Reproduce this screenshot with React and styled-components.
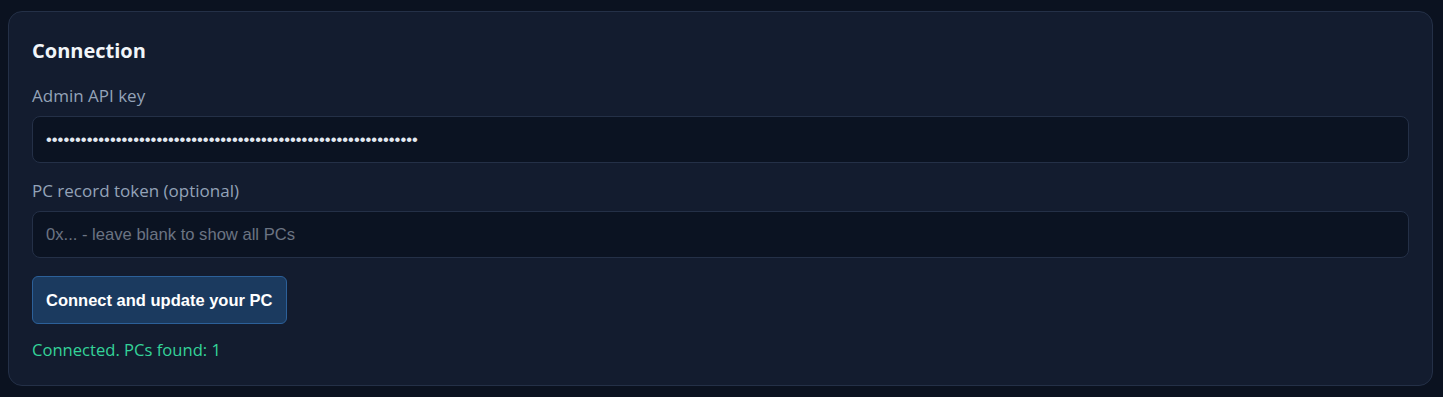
import React, { useState } from 'react'
import styled, { createGlobalStyle } from 'styled-components'

const GlobalStyle = createGlobalStyle`
  html, body {
    margin: 0;
    background: #0b1220;
  }
  body {
    padding: 11px 10px 10px 8px;
    font-family: "Open Sans", "Noto Sans", sans-serif;
  }
`

const Card = styled.section`
  background: #131c2f;
  border: 1px solid #243047;
  border-radius: 14px;
  padding: 25px 23px 23px 23px;
  display: flex;
  flex-direction: column;
`

const Title = styled.h2`
  margin: 0 0 19px;
  font-size: 20px;
  line-height: 28px;
  font-weight: 700;
  color: #f1f5f9;
`

const Field = styled.div`
  display: flex;
  flex-direction: column;
  gap: 8px;
  margin-bottom: ${p => p.$mb || 16}px;
`

const Label = styled.label`
  font-size: 17px;
  line-height: 24px;
  color: #94a3b8;
`

const Input = styled.input`
  box-sizing: border-box;
  height: 47px;
  width: 100%;
  padding: 0 13px;
  background: #0b1322;
  border: 1px solid #243047;
  border-radius: 8px;
  color: #e2e8f0;
  font-family: "Liberation Sans", Arial, sans-serif;
  font-size: 16.6px;
  outline: none;
  &::placeholder {
    color: #6b7483;
  }
`

const Button = styled.button`
  align-self: flex-start;
  height: 48px;
  padding: 0 14px 0 13px;
  background: #1b3a5f;
  border: 1px solid #2c6099;
  border-radius: 6px;
  color: #ffffff;
  font-family: "Liberation Sans", Arial, sans-serif;
  font-size: 16.5px;
  font-weight: 700;
  cursor: pointer;
`

const Status = styled.div`
  margin-top: 14px;
  font-size: 16.6px;
  line-height: 24px;
  color: #34d399;
`

export default function App() {
  const [apiKey, setApiKey] = useState('k'.repeat(64))
  const [token, setToken] = useState('')
  return (
    <>
      <GlobalStyle />
      <Card>
        <Title>Connection</Title>
        <Field>
          <Label>Admin API key</Label>
          <Input type="password" value={apiKey} onChange={e => setApiKey(e.target.value)} />
        </Field>
        <Field $mb={18}>
          <Label>PC record token (optional)</Label>
          <Input
            value={token}
            onChange={e => setToken(e.target.value)}
            placeholder="0x... - leave blank to show all PCs"
          />
        </Field>
        <Button>Connect and update your PC</Button>
        <Status>Connected. PCs found: 1</Status>
      </Card>
    </>
  )
}
